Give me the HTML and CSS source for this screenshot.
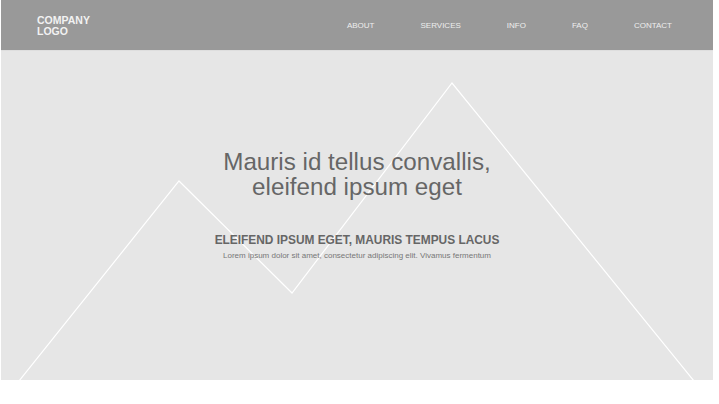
FILE: index.html
```html
<!DOCTYPE html>
<html>
<head>
<meta charset="utf-8">
<link rel="stylesheet" href="styles.css">
</head>
<body>
<div class="page">
  <header class="topbar">
    <div class="logo">COMPANY<br>LOGO</div>
    <nav class="nav">
      <a class="nav-item">ABOUT</a>
      <a class="nav-item">SERVICES</a>
      <a class="nav-item">INFO</a>
      <a class="nav-item">FAQ</a>
      <a class="nav-item">CONTACT</a>
    </nav>
  </header>
  <section class="hero">
    <svg class="mountains" width="712" height="330" viewBox="0 0 712 330">
      <polyline points="18,330 178,130 291,242 451,32 693,330" fill="none" stroke="#ffffff" stroke-width="1.2"/>
    </svg>
    <div class="hero-content">
      <h1 class="hero-title">Mauris id tellus convallis,<br>eleifend ipsum eget</h1>
      <h2 class="hero-sub">ELEIFEND IPSUM EGET, MAURIS TEMPUS LACUS</h2>
      <p class="hero-text">Lorem ipsum dolor sit amet, consectetur adipiscing elit. Vivamus fermentum</p>
    </div>
  </section>
</div>
</body>
</html>
```
FILE: styles.css
```css
html, body {
  margin: 0;
  padding: 0;
  background: #ffffff;
}
body {
  font-family: "Liberation Sans", Arial, sans-serif;
}
.page {
  width: 712px;
  margin-left: 1px;
}
.topbar {
  height: 50px;
  background: #999999;
  display: flex;
  align-items: center;
  justify-content: space-between;
  padding: 0 41px 0 36px;
  box-sizing: border-box;
}
.logo {
  color: #f2f2f2;
  font-weight: bold;
  font-size: 10.5px;
  line-height: 11px;
  padding-top: 1px;
}
.nav {
  display: flex;
  gap: 46px;
  align-items: center;
}
.nav-item {
  color: #eeeeee;
  font-size: 8px;
  text-decoration: none;
}
.hero {
  position: relative;
  height: 330px;
  background: #e6e6e6;
  border-top: 1px solid #dedede;
  box-sizing: border-box;
  overflow: hidden;
}
.mountains {
  position: absolute;
  left: 0;
  top: 0;
}
.hero-content {
  position: relative;
  text-align: center;
  padding-top: 98px;
}
.hero-title {
  margin: 0;
  font-weight: normal;
  font-size: 24.2px;
  line-height: 25px;
  color: #666666;
}
.hero-sub {
  margin: 34px 0 0;
  font-size: 11.9px;
  line-height: 14px;
  font-weight: bold;
  color: #666666;
}
.hero-text {
  margin: 4px 0 0;
  font-size: 8px;
  line-height: 10px;
  color: #777777;
}
```
